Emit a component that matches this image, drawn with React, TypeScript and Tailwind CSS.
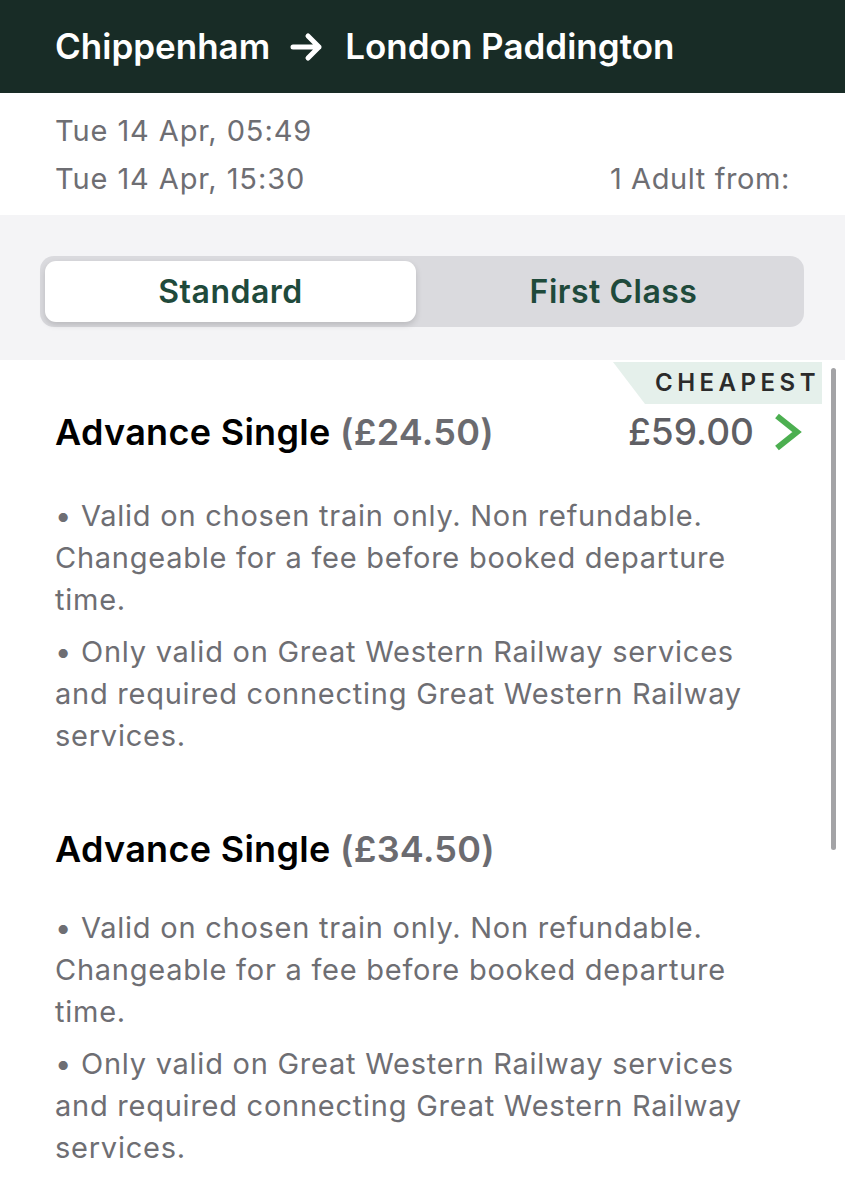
import React from 'react';

const font = { fontFamily: 'Inter, "Noto Sans", sans-serif' };

interface Fare {
  name: string;
  price: string;
  total?: string;
  cheapest?: boolean;
  notes: string[][];
}

const notes = [
  ['• Valid on chosen train only. Non refundable.', 'Changeable for a fee before booked departure', 'time.'],
  ['• Only valid on Great Western Railway services', 'and required connecting Great Western Railway', 'services.'],
];

const fares: Fare[] = [
  { name: 'Advance Single', price: '(£24.50)', total: '£59.00', cheapest: true, notes },
  { name: 'Advance Single', price: '(£34.50)', notes },
];

const FareRow: React.FC<{ fare: Fare }> = ({ fare }) => (
  <div className="relative px-[55px] pb-[20px]">
    <div className="h-[46px]">
      {fare.cheapest && (
        <div
          className="absolute right-[23px] top-[2px] h-[42px] w-[209px] bg-[#e5f0eb] flex items-center justify-end pr-[2px]"
          style={{ clipPath: 'polygon(0 0, 100% 0, 100% 100%, 32px 100%)' }}
        >
          <span className="text-[24px] font-semibold tracking-[4.5px] text-[#2b2b2b]">CHEAPEST</span>
        </div>
      )}
    </div>
    <div className="flex items-center justify-between h-[56px] -mt-[2px]">
      <div className="text-[36px] font-semibold text-black tracking-[0.3px]">
        {fare.name} <span className="text-[#6b6b70]">{fare.price}</span>
      </div>
      {fare.total && (
        <div className="flex items-center gap-[18px] -mr-[14px]">
          <span className="text-[37px] font-medium text-[#5f5f64]">{fare.total}</span>
          <svg width="32" height="40" viewBox="0 0 32 40" fill="none">
            <path d="M5 4 L25 20 L5 36" stroke="#4caf50" strokeWidth="6" strokeLinejoin="miter" />
          </svg>
        </div>
      )}
    </div>
    <div
      className={`${fare.cheapest ? 'mt-[35px]' : 'mt-[30px]'} flex flex-col gap-[10px] text-[29px] leading-[42px] tracking-[0.75px] text-[#6e6e73]`}
    >
      {fare.notes.map((lines, i) => (
        <div key={i}>
          {lines.map((l, j) => (
            <div key={j} className="whitespace-nowrap">{l}</div>
          ))}
        </div>
      ))}
    </div>
  </div>
);

export default function App() {
  return (
    <div className="w-[845px] h-[1200px] overflow-hidden bg-white relative" style={font}>
      <header className="h-[93px] bg-[#182c26] flex items-center px-[55px]">
        <h1 className="text-[35px] font-semibold text-white flex items-center gap-[20px]">
          <span>Chippenham</span>
          <svg width="35" height="32" viewBox="0 0 35 32" fill="none">
            <path d="M3 16 H29 M18 5 L29 16 L18 27" stroke="white" strokeWidth="5" strokeLinecap="round" strokeLinejoin="round" />
          </svg>
          <span>London Paddington</span>
        </h1>
      </header>

      <section className="h-[122px] px-[55px] pt-[14px] text-[29px] leading-[48px] tracking-[0.9px] text-[#6e6e73]">
        <div>Tue 14 Apr, 05:49</div>
        <div className="flex justify-between">
          <span>Tue 14 Apr, 15:30</span>
          <span className="tracking-[0.6px]">1 Adult from:</span>
        </div>
      </section>

      <section className="h-[145px] bg-[#f4f4f6] px-[40px] pt-[41px]">
        <div className="h-[71px] w-[764px] rounded-[14px] bg-[#dadade] p-[5px] flex">
          <button className="w-[371px] rounded-[11px] bg-white shadow-[0_3px_6px_rgba(0,0,0,0.15)] text-[32px] font-semibold tracking-[0.5px] text-[#1f4a3b]">
            Standard
          </button>
          <button className="flex-1 pl-[12px] text-[32px] font-semibold tracking-[0.5px] text-[#1f4a3b]">First Class</button>
        </div>
      </section>

      <section className="relative">
        {fares.map((f, i) => (
          <FareRow key={i} fare={f} />
        ))}
        <div className="absolute right-[9px] top-[8px] h-[482px] w-[5px] rounded-full bg-[#a3a3a6]" />
      </section>
    </div>
  );
}
